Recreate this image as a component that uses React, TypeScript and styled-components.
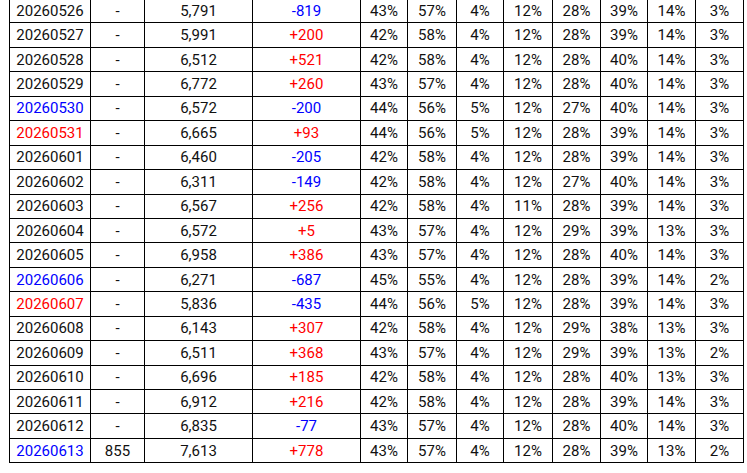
import React from "react";
import styled, { createGlobalStyle } from "styled-components";

const Global = createGlobalStyle`
  html, body { margin: 0; padding: 0; background: #ffffff; }
  body { font-family: Roboto, "Noto Sans", sans-serif; }
`;

const Wrap = styled.div`
  padding-left: 9px;
  margin-top: -2px;
`;

const Table = styled.table`
  border-collapse: collapse;
  table-layout: fixed;
  width: 734px;
  font-size: 15px;
  color: #111111;
`;

const Cell = styled.td<{ $tone?: "red" | "blue" }>`
  border: 1px solid #000000;
  height: 23.44px;
  padding: 0;
  text-align: center;
  vertical-align: middle;
  white-space: nowrap;
  color: ${(p) => (p.$tone === "red" ? "#ff0000" : p.$tone === "blue" ? "#0000ff" : "#111111")};
`;

type Row = [string, string, string, string, number[], ("red" | "blue")?];

const rows: Row[] = [
  ["20260526", "-", "5,791", "-819", [43, 57, 4, 12, 28, 39, 14, 3]],
  ["20260527", "-", "5,991", "+200", [42, 58, 4, 12, 28, 39, 14, 3]],
  ["20260528", "-", "6,512", "+521", [42, 58, 4, 12, 28, 40, 14, 3]],
  ["20260529", "-", "6,772", "+260", [43, 57, 4, 12, 28, 40, 14, 3]],
  ["20260530", "-", "6,572", "-200", [44, 56, 5, 12, 27, 40, 14, 3], "blue"],
  ["20260531", "-", "6,665", "+93", [44, 56, 5, 12, 28, 39, 14, 3], "red"],
  ["20260601", "-", "6,460", "-205", [42, 58, 4, 12, 28, 39, 14, 3]],
  ["20260602", "-", "6,311", "-149", [42, 58, 4, 12, 27, 40, 14, 3]],
  ["20260603", "-", "6,567", "+256", [42, 58, 4, 11, 28, 39, 14, 3]],
  ["20260604", "-", "6,572", "+5", [43, 57, 4, 12, 29, 39, 13, 3]],
  ["20260605", "-", "6,958", "+386", [43, 57, 4, 12, 28, 40, 14, 3]],
  ["20260606", "-", "6,271", "-687", [45, 55, 4, 12, 28, 39, 14, 2], "blue"],
  ["20260607", "-", "5,836", "-435", [44, 56, 5, 12, 28, 39, 14, 3], "red"],
  ["20260608", "-", "6,143", "+307", [42, 58, 4, 12, 29, 38, 13, 3]],
  ["20260609", "-", "6,511", "+368", [43, 57, 4, 12, 29, 39, 13, 2]],
  ["20260610", "-", "6,696", "+185", [42, 58, 4, 12, 28, 40, 13, 3]],
  ["20260611", "-", "6,912", "+216", [42, 58, 4, 12, 28, 39, 14, 3]],
  ["20260612", "-", "6,835", "-77", [43, 57, 4, 12, 28, 40, 14, 3]],
  ["20260613", "855", "7,613", "+778", [43, 57, 4, 12, 28, 39, 13, 2], "blue"],
];

const widths = [81, 54, 108, 108, 47, 49, 47, 49, 48, 47, 48, 48];

export default function App() {
  return (
    <>
      <Global />
      <Wrap>
        <Table>
          <colgroup>
            {widths.map((w, i) => (
              <col key={i} style={{ width: w }} />
            ))}
          </colgroup>
          <tbody>
            {rows.map(([date, a, total, delta, pcts, tone]) => (
              <tr key={date}>
                <Cell $tone={tone}>{date}</Cell>
                <Cell>{a}</Cell>
                <Cell>{total}</Cell>
                <Cell $tone={delta.startsWith("+") ? "red" : "blue"}>{delta}</Cell>
                {pcts.map((p, i) => (
                  <Cell key={i}>{p}%</Cell>
                ))}
              </tr>
            ))}
          </tbody>
        </Table>
      </Wrap>
    </>
  );
}
